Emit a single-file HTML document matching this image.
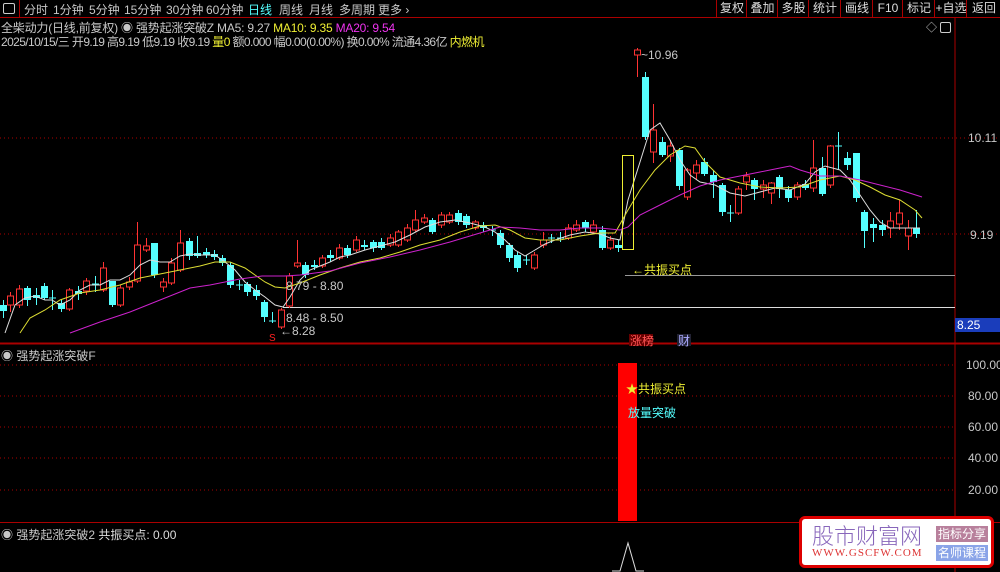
<!DOCTYPE html>
<html><head><meta charset="utf-8"><style>
body{margin:0;background:#000;width:1000px;height:572px;overflow:hidden;font-family:"Liberation Sans","Noto Sans CJK SC",sans-serif;position:relative}
.t{position:absolute;font-size:12px;white-space:nowrap;color:#c8c8c8}
#top{position:absolute;left:0;top:0;width:1000px;height:17px;border-bottom:1px solid #a00}
#top span{position:absolute;top:1px;font-size:12px;color:#c8c8c8}
.btn{position:absolute;top:0;height:17px;border-left:1px solid #a00;font-size:12px;color:#ddd;text-align:center;line-height:17px}
</style></head><body>
<div id="top">
<div style="position:absolute;left:3px;top:3px;width:10px;height:9px;border:1px solid #ccc;border-radius:2px"></div>
<div style="position:absolute;left:19px;top:0;height:17px;border-left:1px solid #a00"></div>
<span style="left:24px">分时</span><span style="left:53px">1分钟</span><span style="left:89px">5分钟</span><span style="left:124px">15分钟</span><span style="left:166px">30分钟</span><span style="left:206px">60分钟</span><span style="left:248px;color:#5ff">日线</span><span style="left:279px">周线</span><span style="left:309px">月线</span><span style="left:339px">多周期</span><span style="left:378px">更多 ›</span>
<div class="btn" style="left:716px;width:30px">复权</div><div class="btn" style="left:746px;width:31px">叠加</div><div class="btn" style="left:777px;width:31px">多股</div><div class="btn" style="left:808px;width:32px">统计</div><div class="btn" style="left:840px;width:32px">画线</div><div class="btn" style="left:872px;width:30px">F10</div><div class="btn" style="left:902px;width:32px">标记</div><div class="btn" style="left:934px;width:32px">+自选</div><div class="btn" style="left:966px;width:34px">返回</div>
</div>
<div class="t" style="left:1px;top:19px;letter-spacing:-0.2px">全柴动力(日线,前复权) ◉ 强势起涨突破Z MA5: 9.27 <span style="color:#ee3">MA10: 9.35</span> <span style="color:#e3e">MA20: 9.54</span></div>
<div class="t" style="left:1px;top:33px;letter-spacing:-0.6px">2025/10/15/三 开9.19 高9.19 低9.19 收9.19 <span style="color:#ee3">量0</span> 额0.000 幅0.00(0.00%) 换0.00% 流通4.36亿 <span style="color:#ee3">内燃机</span></div>
<div class="t" style="left:926px;top:19px;font-size:11px">◇</div>
<div style="position:absolute;left:940px;top:22px;width:9px;height:9px;border:1px solid #ccc;border-radius:2px"></div>
<svg width="1000" height="572" style="position:absolute;left:0;top:0" id="s">
<line x1="955" y1="18" x2="955" y2="572" stroke="#a00"/>
<line x1="0" y1="343.5" x2="1000" y2="343.5" stroke="#a00" stroke-width="2"/>
<line x1="0" y1="522.5" x2="1000" y2="522.5" stroke="#a00"/>
<line x1="0" y1="138" x2="1000" y2="138" stroke="#a00" stroke-dasharray="1,3"/>
<line x1="0" y1="234" x2="1000" y2="234" stroke="#a00" stroke-dasharray="1,3"/>
<g stroke="#a00" stroke-dasharray="1,3"><line x1="0" y1="365" x2="955" y2="365"/><line x1="0" y1="396" x2="955" y2="396"/><line x1="0" y1="427" x2="955" y2="427"/><line x1="0" y1="458" x2="955" y2="458"/><line x1="0" y1="490" x2="955" y2="490"/></g>
<line x1="625" y1="275.5" x2="955" y2="275.5" stroke="#999"/>
<line x1="283" y1="307.5" x2="955" y2="307.5" stroke="#ddd"/>
<g id="c"></g>
<polyline fill="none" stroke="#ddd" points="5,333 15,305 25,298 35,296 45,300 52,300 60,305 70,300 80,290 90,285 100,285 110,280 120,280 130,275 140,265 150,260 160,262 170,262 180,256 190,254 200,255 215,255 225,262 235,270 245,282 255,290 265,297 275,305 283,307 290,297 300,280 310,270 320,266 330,262 340,257 350,255 365,250 380,246 395,242 410,235 425,227 440,222 455,220 470,223 485,227 495,232 505,240 515,250 525,256 535,250 545,244 555,240 570,235 585,232 600,234 610,238 620,240 628,200 640,162 650,130 660,123 670,140 680,160 690,175 700,182 715,185 730,193 745,196 760,192 775,188 790,190 805,184 815,172 825,166 840,170 850,180 860,195 870,210 880,222 890,228 905,228 920,228"/>
<polyline fill="none" stroke="#dd3" points="20,333 30,318 45,310 60,300 80,293 100,290 120,285 140,278 160,274 180,270 200,266 215,262 230,262 245,268 255,275 265,282 275,287 285,288 300,283 320,275 340,268 360,262 380,258 400,252 420,245 440,240 460,232 480,226 495,225 510,230 525,238 540,240 560,240 580,236 600,233 615,233 628,210 640,190 655,170 670,155 685,146 695,148 705,162 720,177 740,183 760,187 780,188 800,187 820,180 840,176 855,180 870,187 885,195 900,200 915,210 922,218"/>
<polyline fill="none" stroke="#c2c" points="70,333 100,322 130,312 160,300 190,288 210,285 240,279 262,276 285,276 300,275 330,271 360,263 390,257 420,250 450,242 480,233 500,227 520,228 540,230 560,230 580,228 600,228 620,230 628,227 640,215 660,205 680,195 700,186 720,180 740,176 760,172 780,168 790,166 800,170 820,176 840,176 860,180 880,185 900,190 922,197"/>
<rect x="622.5" y="155.5" width="11" height="94" fill="none" stroke="#ee3"/>
<rect x="618" y="363" width="19" height="158" fill="#f00"/>
<polyline fill="none" stroke="#ddd" points="612,571 620,571 628,543 636,571 644,571"/>
</svg>
<div class="t" style="left:641px;top:48px">~10.96</div>
<div class="t" style="left:286px;top:279px">8.79 - 8.80</div>
<div class="t" style="left:286px;top:311px">8.48 - 8.50</div>
<div class="t" style="left:280px;top:324px">←8.28</div>
<div class="t" style="left:269px;top:333px;color:#f22;font-size:10px">S</div>
<div class="t" style="left:632px;top:261px;color:#ee3">←共振买点</div>
<div class="t" style="left:968px;top:131px">10.11</div>
<div class="t" style="left:970px;top:228px">9.19</div>
<div style="position:absolute;left:955px;top:318px;width:45px;height:14px;background:#1a3dbb"></div>
<div class="t" style="left:957px;top:318px;color:#fff">8.25</div>
<div style="position:absolute;left:629px;top:334px;width:24px;height:12px;background:#600"></div>
<div class="t" style="left:630px;top:332px;color:#f55">涨榜</div>
<div style="position:absolute;left:677px;top:334px;width:14px;height:12px;background:#223"></div>
<div class="t" style="left:678px;top:332px;color:#aaf">财</div>
<div class="t" style="left:1px;top:347px">◉ 强势起涨突破F</div>
<div class="t" style="left:626px;top:380px;color:#ee3">★共振买点</div>
<div class="t" style="left:628px;top:404px;color:#5ff">放量突破</div>
<div class="t" style="left:966px;top:358px">100.00</div>
<div class="t" style="left:968px;top:389px">80.00</div>
<div class="t" style="left:968px;top:420px">60.00</div>
<div class="t" style="left:968px;top:451px">40.00</div>
<div class="t" style="left:968px;top:483px">20.00</div>
<div class="t" style="left:1px;top:526px">◉ 强势起涨突破2 <span style="color:#ddd">共振买点: 0.00</span></div>
<div style="position:absolute;left:799px;top:516px;width:195px;height:52px;background:#fff;border:3px solid #d00;border-radius:6px;box-sizing:border-box"></div>
<div class="t" style="left:812px;top:519px;font-size:22px;color:#8866bb;font-family:'Noto Sans CJK SC',sans-serif;font-weight:300">股市财富网</div>
<div class="t" style="left:812px;top:547px;font-size:11px;color:#d33;font-family:'Liberation Serif',serif;letter-spacing:1px">WWW.GSCFW.COM</div>
<div style="position:absolute;left:936px;top:526px;width:52px;height:16px;background:#b8809c;color:#fff;font-size:12px;text-align:center;line-height:16px">指标分享</div>
<div style="position:absolute;left:936px;top:545px;width:52px;height:16px;background:#8aa4e8;color:#fff;font-size:12px;text-align:center;line-height:16px">名师课程</div>
<script>
var d=[[3,305,311,300,318],[10,305,296,292,312],[19,305,289,285,308],[27,288,300,286,306],[36,295,298,288,305],[44,286,298,283,300],[52,298,298,290,310],[61,303,309,300,312],[69,309,290,288,311],[78,291,294,286,300],[86,291,281,278,295],[95,284,285,276,292],[103,290,268,262,292],[112,281,305,281,307],[120,305,288,285,307],[129,287,282,277,290],[137,281,245,222,283],[146,250,246,238,252],[154,243,275,243,278],[163,287,282,278,292],[171,283,263,258,285],[180,270,243,230,272],[189,241,256,238,260],[197,253,256,236,258],[206,252,255,248,258],[214,254,257,250,260],[222,258,263,255,266],[230,265,285,262,288],[239,285,285,280,290],[247,284,292,282,296],[256,290,296,285,300],[264,302,317,300,322],[272,321,321,312,323],[281,327,310,308,329],[289,306,276,273,308],[297,266,263,240,268],[305,265,275,262,278],[314,265,267,260,270],[322,266,258,255,268],[330,255,258,250,262],[339,258,248,244,260],[347,248,255,245,258],[356,250,240,236,252],[364,245,247,240,250],[373,242,248,240,252],[381,242,248,238,250],[390,245,238,234,247],[398,245,232,230,247],[407,240,228,224,242],[415,230,220,210,232],[424,222,218,214,224],[432,220,232,218,234],[441,225,215,212,228],[449,222,215,212,224],[458,213,222,210,225],[466,216,225,214,228],[475,228,222,220,230],[483,225,228,222,232],[492,230,230,226,236],[500,233,245,230,248],[509,245,258,243,262],[517,255,268,252,272],[526,260,260,255,265],[534,268,255,252,270],[543,245,240,232,248],[551,238,238,234,243],[560,238,238,232,242],[568,238,228,224,240],[576,230,225,220,232],[585,222,228,220,232],[593,232,225,220,234],[602,230,248,226,250],[610,248,240,236,250],[618,245,248,240,252],[637,55,50,48,77],[645,77,137,72,140],[653,152,130,104,163],[662,142,155,137,157],[670,156,146,140,162],[679,150,186,148,190],[687,197,170,168,200],[696,173,165,160,180],[704,162,174,158,176],[713,175,182,170,198],[722,185,212,183,216],[730,213,213,205,222],[738,213,189,186,215],[746,182,176,172,190],[754,180,189,178,200],[763,189,185,180,198],[771,193,183,182,204],[779,177,189,175,198],[788,190,198,186,202],[797,197,185,182,200],[805,184,188,180,190],[813,188,168,140,192],[822,168,194,157,196],[830,185,146,145,188],[838,146,146,132,170],[847,158,165,152,170],[856,153,198,153,202],[864,212,231,210,248],[873,224,228,218,242],[882,225,230,220,236],[890,228,221,212,238],[899,224,213,200,230],[908,236,228,220,250],[916,228,234,210,238]];
var g=document.getElementById('c'),h='';
d.forEach(function(c){var x=c[0],o=c[1],cl=c[2],up=cl<o,col=up?'#f33':'#5ff',t=Math.min(o,cl),b=Math.max(o,cl);
h+='<line x1="'+(x+.5)+'" y1="'+c[3]+'" x2="'+(x+.5)+'" y2="'+c[4]+'" stroke="'+col+'"/>';
if(b-t<1.5)h+='<line x1="'+(x-3)+'" y1="'+t+'" x2="'+(x+4)+'" y2="'+t+'" stroke="'+col+'"/>';
else if(up)h+='<rect x="'+(x-2.5)+'" y="'+t+'" width="6" height="'+(b-t)+'" fill="#000" stroke="'+col+'"/>';
else h+='<rect x="'+(x-3)+'" y="'+t+'" width="7" height="'+(b-t)+'" fill="'+col+'"/>';});
g.innerHTML=h;
</script>
</body></html>
